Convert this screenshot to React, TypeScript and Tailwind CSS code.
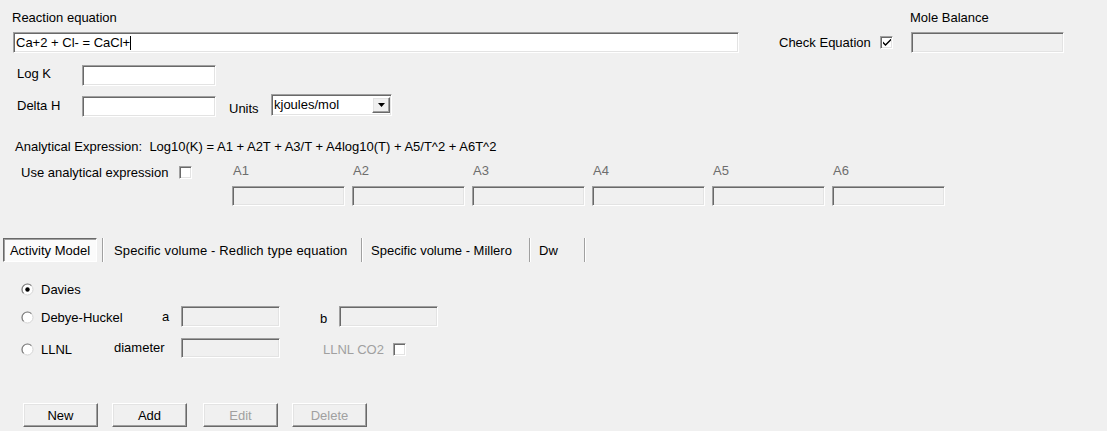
import React from "react";

const sunken =
  "border border-t-[#a0a0a0] border-l-[#a0a0a0] border-b-white border-r-white shadow-[inset_1px_1px_0_#696969,inset_-1px_-1px_0_#e3e3e3]";
const raised =
  "border border-t-white border-l-white border-b-[#696969] border-r-[#696969] shadow-[inset_-1px_-1px_0_#a0a0a0,inset_1px_1px_0_#e3e3e3]";

function Box({ w, h = "h-[21px]", white = false }: { w: string; h?: string; white?: boolean }) {
  return <div className={`${w} ${h} ${sunken} ${white ? "bg-white" : "bg-[#f0f0f0]"}`} />;
}

function Check({ checked = false }: { checked?: boolean }) {
  return (
    <div className={`w-[13px] h-[13px] ${sunken} bg-white flex items-center justify-center`}>
      {checked && (
        <svg width="8" height="7" viewBox="0 0 8 7">
          <path d="M0 2.5 L0 4.5 L2.5 7 L8 1.5 L8 -0.5 L2.5 5 Z" fill="#000" />
        </svg>
      )}
    </div>
  );
}

function Radio({ on = false }: { on?: boolean }) {
  return (
    <svg width="13" height="13" viewBox="0 0 13 13" className="shrink-0">
      <circle cx="6.5" cy="6.5" r="5.5" fill="#fff" stroke="#d4d4d4" strokeWidth="1" />
      <path d="M10.39 2.61 A5.5 5.5 0 0 0 2.61 10.39" stroke="#7d7d7d" strokeWidth="1.2" fill="none" />
      {on && <circle cx="6.5" cy="6.5" r="2.2" fill="#000" />}
    </svg>
  );
}

function Btn({ label, disabled = false }: { label: string; disabled?: boolean }) {
  return (
    <div
      className={`w-[75px] h-[24px] bg-[#f0f0f0] ${raised} flex items-center justify-center ${
        disabled ? "text-[#a0a0a0]" : "text-black"
      }`}
    >
      {label}
    </div>
  );
}

function Sep() {
  return <div className="w-[2px] h-[24px] border-l border-l-[#a0a0a0] border-r border-r-white" />;
}

export default function App() {
  return (
    <div className="w-[1107px] h-[431px] bg-[#f0f0f0] text-black text-[13px] leading-[15px] font-['Liberation_Sans',Arial,sans-serif] flex flex-col overflow-hidden">
      {/* Row 1 */}
      <div className="flex pt-[10px]">
        <div className="ml-[12px] flex flex-col">
          <div className="h-[15px]">Reaction equation</div>
          <div className={`mt-[7px] ml-[1px] w-[726px] h-[21px] bg-white ${sunken} flex items-center pl-[2px]`}>
            <span>Ca+2 + Cl- = CaCl+</span>
            <span className="inline-block w-[1px] h-[14px] bg-black" />
          </div>
        </div>
        <div className="ml-[40px] mt-[22px] h-[21px] flex items-center">
          <div className="w-[101px]">Check Equation</div>
          <Check checked />
        </div>
        <div className="ml-[17px] flex flex-col">
          <div className="h-[15px]">Mole Balance</div>
          <div className="mt-[7px] ml-[1px]">
            <Box w="w-[153px]" />
          </div>
        </div>
      </div>

      {/* Log K */}
      <div className="flex items-center mt-[12px] pl-[17px] h-[21px]">
        <div className="w-[65px] -mt-[4px]">Log K</div>
        <Box w="w-[134px]" white />
      </div>

      {/* Delta H */}
      <div className="flex mt-[8px] pl-[17px] h-[23px]">
        <div className="w-[65px] self-center">Delta H</div>
        <div className="mt-[2px]">
          <Box w="w-[134px]" white />
        </div>
        <div className="ml-[13px] w-[42px] self-center mt-[6px]">Units</div>
        <div className={`w-[121px] h-[22px] bg-white ${sunken} flex items-center justify-between pl-[2px] pr-[1px]`}>
          <span className="-mt-[2px]">kjoules/mol</span>
          <div className={`w-[18px] h-[16px] bg-[#f0f0f0] ${raised} flex items-center justify-center`}>
            <svg width="7" height="4" viewBox="0 0 7 4">
              <path d="M0 0 L7 0 L3.5 4 Z" fill="#000" />
            </svg>
          </div>
        </div>
      </div>

      {/* Analytical expression */}
      <div className="mt-[22px] pl-[15px]">
        Analytical Expression:&nbsp; Log10(K) = A1 + A2T + A3/T + A4log10(T) + A5/T^2 + A6T^2
      </div>

      <div className="flex mt-[9px]">
        <div className="pl-[21px] w-[232px] flex items-start">
          <div className="w-[158px] mt-[2px]">Use analytical expression</div>
          <div className="mt-[3px]">
            <Check />
          </div>
        </div>
        <div className="flex gap-[7px]">
          {["A1", "A2", "A3", "A4", "A5", "A6"].map((a) => (
            <div key={a} className="flex flex-col w-[113px]">
              <div className="pl-[1px] text-[#6d6d6d]">{a}</div>
              <div className="mt-[8px]">
                <Box w="w-[113px]" h="h-[20px]" />
              </div>
            </div>
          ))}
        </div>
      </div>

      {/* Tabs */}
      <div className="flex mt-[32px] h-[24px] items-center">
        <div className="ml-[3px] w-[94px] h-[24px] bg-[#fbfbfb] border border-t-[#696969] border-l-[#696969] border-b-white border-r-white shadow-[inset_1px_1px_0_#a0a0a0] flex items-center justify-center">
          Activity Model
        </div>
        <div className="w-[5px]" />
        <Sep />
        <div className="w-[257px] pl-[10px] tracking-[0.15px]">Specific volume - Redlich type equation</div>
        <Sep />
        <div className="w-[166px] pl-[8px]">Specific volume - Millero</div>
        <Sep />
        <div className="w-[53px] pl-[8px]">Dw</div>
        <Sep />
      </div>

      {/* Radios */}
      <div className="flex items-center mt-[17px] h-[21px] pl-[21px]">
        <div className="w-[20px] flex">
          <Radio on />
        </div>
        <div>Davies</div>
      </div>
      <div className="flex items-center mt-[6px] h-[21px] pl-[21px]">
        <div className="w-[20px] flex mt-[2px]">
          <Radio />
        </div>
        <div className="w-[121px] mt-[2px]">Debye-Huckel</div>
        <div className="w-[19px]">a</div>
        <Box w="w-[99px]" />
        <div className="ml-[40px] w-[19px] mt-[3px]">b</div>
        <Box w="w-[99px]" />
      </div>
      <div className="flex items-center mt-[10px] h-[21px] pl-[21px]">
        <div className="w-[20px] flex mt-[3px]">
          <Radio />
        </div>
        <div className="w-[73px] mt-[3px]">LLNL</div>
        <div className="w-[67px]">diameter</div>
        <Box w="w-[99px]" h="h-[20px]" />
        <div className="ml-[43px] w-[70px] mt-[3px] text-[#a0a0a0]">LLNL CO2</div>
        <div className="mt-[3px]">
          <Check />
        </div>
      </div>

      {/* Buttons */}
      <div className="flex mt-[45px] pl-[23px]">
        <Btn label="New" />
        <div className="w-[14px]" />
        <Btn label="Add" />
        <div className="w-[16px]" />
        <Btn label="Edit" disabled />
        <div className="w-[14px]" />
        <Btn label="Delete" disabled />
      </div>
    </div>
  );
}
